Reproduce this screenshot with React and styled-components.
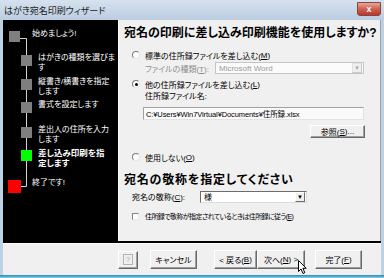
import React from "react";
import styled, { createGlobalStyle } from "styled-components";

const FONT = `"Liberation Sans", "Noto Sans CJK JP", sans-serif`;

const GlobalStyle = createGlobalStyle`
  body {
    margin: 0;
    background: #ffffff;
  }
  * {
    box-sizing: border-box;
  }
`;

const Window = styled.div`
  position: relative;
  width: 384px;
  height: 278px;
  display: flex;
  flex-direction: column;
  background: #bfd1e5;
  font-family: ${FONT};
  font-feature-settings: "palt";
  overflow: hidden;
`;

const TitleBar = styled.div`
  height: 20px;
  flex: none;
  display: flex;
  align-items: center;
  justify-content: space-between;
  padding: 0 3px 0 4px;
  background: linear-gradient(#d5e1ee, #bccde1);
`;

const Title = styled.span`
  font-size: 9px;
  color: #1b1b1b;
  white-space: nowrap;
`;

const CloseButton = styled.div`
  width: 24px;
  height: 14px;
  margin-top: -2px;
  display: flex;
  align-items: center;
  justify-content: center;
  border: 1px solid #86463f;
  border-radius: 0 0 3px 3px;
  background: linear-gradient(#e9a796, #cf5f51 50%, #b9392c);
  color: #fff;
  font-size: 9px;
  font-weight: bold;
  line-height: 1;
`;

const Client = styled.div`
  flex: 1;
  margin: 0 3px;
  display: flex;
  flex-direction: column;
  background: #f0f0f0;
`;

const Main = styled.div`
  height: 223px;
  flex: none;
  display: flex;
  border-bottom: 2px solid #000;
`;

const LeftPanel = styled.div`
  position: relative;
  width: 115px;
  flex: none;
  background: #000;
  padding-top: 9px;
`;

const Connector = styled.svg`
  position: absolute;
  left: 0;
  top: 0;
`;

const Step = styled.div`
  position: relative;
  display: flex;
  align-items: flex-start;
  height: ${(p) => p.$h}px;
  padding-left: ${(p) => p.$indent}px;
`;

const Marker = styled.span`
  flex: none;
  width: ${(p) => p.$size}px;
  height: ${(p) => p.$size}px;
  margin-top: 2px;
  background: ${(p) => p.$color};
`;

const StepText = styled.div`
  margin-left: ${(p) => p.$gap}px;
  color: #fff;
  font-size: ${(p) => (p.$active ? 8.5 : 8)}px;
  font-weight: ${(p) => (p.$active ? "bold" : "normal")};
  line-height: 10px;
  white-space: nowrap;
`;

const RightPanel = styled.div`
  flex: 1;
  display: flex;
  flex-direction: column;
  padding-top: 4px;
  background: #f0f0f0;
  border-left: 1px solid #fff;
  border-right: 1px solid #a0a0a0;
`;

const Heading = styled.div`
  height: 18px;
  margin-top: ${(p) => p.$mt || 0}px;
  padding-left: 5px;
  font-size: 12px;
  font-weight: bold;
  line-height: 18px;
  letter-spacing: ${(p) => p.$spacing || 0}px;
  color: #000;
  white-space: nowrap;
`;

const Row = styled.div`
  display: flex;
  align-items: center;
  height: ${(p) => p.$h}px;
  margin-top: ${(p) => p.$mt || 0}px;
  padding-left: ${(p) => p.$indent}px;
  font-size: 8px;
  color: ${(p) => (p.$disabled ? "#8d8d8d" : "#000")};
  white-space: nowrap;
`;

const Squeezed = styled.span`
  font-size: 7px;
  letter-spacing: -0.6px;
`;

const Radio = styled.span`
  flex: none;
  position: relative;
  width: 8px;
  height: 8px;
  margin-right: 5px;
  border-radius: 50%;
  border: 1px solid;
  border-color: #7c7c7c #e6e6e6 #e6e6e6 #7c7c7c;
  background: #fff;

  &::after {
    content: "";
    display: ${(p) => (p.$checked ? "block" : "none")};
    position: absolute;
    left: 1.5px;
    top: 1.5px;
    width: 3px;
    height: 3px;
    border-radius: 50%;
    background: #000;
  }
`;

const Check = styled.span`
  flex: none;
  width: 7px;
  height: 7px;
  margin-right: 6px;
  border: 1px solid;
  border-color: #848484 #e8e8e8 #e8e8e8 #848484;
  background: #fff;
`;

const Key = styled.span`
  text-decoration: underline;
`;

const Label = styled.span`
  width: ${(p) => p.$w}px;
  flex: none;
`;

const Combo = styled.div`
  width: ${(p) => p.$w}px;
  height: 12px;
  display: flex;
  align-items: center;
  padding-left: 3px;
  background: ${(p) => (p.$disabled ? "#fbfbfb" : "#fff")};
  border: 1px solid;
  border-color: ${(p) =>
    p.$disabled ? "#c5c5c5" : "#6d6d6d #dcdcdc #dcdcdc #6d6d6d"};
  color: ${(p) => (p.$disabled ? "#9a9a9a" : "#000")};
  font-size: 8px;
`;

const ComboValue = styled.span`
  flex: 1;
`;

const ComboArrow = styled.span`
  flex: none;
  width: 10px;
  height: 10px;
  margin-right: 1px;
  display: flex;
  align-items: center;
  justify-content: center;
  background: #f0f0f0;
  border: 1px solid;
  border-color: ${(p) =>
    p.$disabled ? "#e2e2e2 #c9c9c9 #c9c9c9 #e2e2e2" : "#fff #6d6d6d #6d6d6d #fff"};
  color: ${(p) => (p.$disabled ? "#a8a8a8" : "#000")};
  font-size: 6px;
  line-height: 1;
`;

const Field = styled.div`
  width: 221px;
  height: 13px;
  display: flex;
  align-items: center;
  padding-left: 2px;
  background: #fafafa;
  border: 1px solid;
  border-color: #a0a0a0 #e3e3e3 #e3e3e3 #a0a0a0;
  font-size: 7.5px;
  letter-spacing: -0.1px;
  color: #000;
`;

const Button = styled.button`
  flex: none;
  width: ${(p) => p.$w}px;
  height: ${(p) => p.$h || 19}px;
  margin-left: ${(p) => p.$ml || 0}px;
  padding: 0;
  display: flex;
  align-items: center;
  justify-content: center;
  background: #f0f0f0;
  border: 1px solid;
  border-color: #fff #696969 #696969 #fff;
  box-shadow: inset -1px -1px 0 #a0a0a0;
  font-family: ${FONT};
  font-feature-settings: "palt";
  font-size: 8px;
  color: #000;
  white-space: nowrap;
`;

const HelpGlyph = styled.span`
  width: 10px;
  height: 11px;
  display: flex;
  align-items: center;
  justify-content: center;
  border: 1px solid #b4b4b4;
  color: #a8a8a8;
  font-size: 8px;
  line-height: 1;
`;

const Footer = styled.div`
  height: 32px;
  flex: none;
  display: flex;
  align-items: center;
  padding-left: 115px;
  border-top: 1px solid #fff;
`;

const BottomEdge = styled.div`
  height: 3px;
  flex: none;
  background: linear-gradient(#2f86ad, #7fd0ec);
`;

const Cursor = styled.svg`
  position: absolute;
  left: 298px;
  top: 260px;
`;

const steps = [
  { h: 24, lines: ["はがきの種類を選びま", "す"] },
  { h: 23, lines: ["縦書き/横書きを指定", "します"] },
  { h: 25, lines: ["書式を設定します"] },
  { h: 23, lines: ["差出人の住所を入力", "します"] },
  { h: 30, lines: ["差し込み印刷を指", "定します"], active: true },
];

const App = () => {
  return (
    <>
      <GlobalStyle />
      <Window>
        <TitleBar>
          <Title>はがき宛名印刷ウィザード</Title>
          <CloseButton>x</CloseButton>
        </TitleBar>

        <Client>
          <Main>
            <LeftPanel>
              <Connector width="115" height="221">
                <path d="M17 18.5 H23.5 V166.5 H18" fill="none" stroke="#d4d4d4" strokeWidth="1" />
              </Connector>

              <Step $h={24} $indent={6}>
                <Marker $size={11} $color="#7f7f7f" />
                <StepText $gap={12}>始めましょう!</StepText>
              </Step>

              {steps.map((s, i) => (
                <Step key={i} $h={s.h} $indent={18}>
                  <Marker $size={11} $color={s.active ? "#00ff00" : "#7f7f7f"} />
                  <StepText $gap={6} $active={s.active}>
                    {s.lines.map((l, j) => (
                      <div key={j}>{l}</div>
                    ))}
                  </StepText>
                </Step>
              ))}

              <Step $h={20} $indent={5}>
                <Marker $size={13} $color="#ff0000" />
                <StepText $gap={11}>終了です!</StepText>
              </Step>
            </LeftPanel>

            <RightPanel>
              <Heading>宛名の印刷に差し込み印刷機能を使用しますか?</Heading>

              <Row $h={12} $mt={7} $indent={13}>
                <Radio />
                標準の住所録ファイルを差し込む(<Key>M</Key>)
              </Row>
              <Row $h={14} $indent={26} $disabled>
                <Label $w={70}>ファイルの種類(<Key>T</Key>):</Label>
                <Combo $w={149} $disabled>
                  <ComboValue>Microsoft Word</ComboValue>
                  <ComboArrow $disabled>▼</ComboArrow>
                </Combo>
              </Row>

              <Row $h={12} $mt={3} $indent={13}>
                <Radio $checked />
                他の住所録ファイルを差し込む(<Key>L</Key>)
              </Row>
              <Row $h={10} $indent={26}>
                住所録ファイル名:
              </Row>
              <Row $h={13} $mt={7} $indent={24}>
                <Field>C:¥Users¥Win7Virtual¥Documents¥住所録.xlsx</Field>
              </Row>
              <Row $h={13} $mt={5} $indent={191}>
                <Button $w={55} $h={13}>
                  参照(<Key>S</Key>)...
                </Button>
              </Row>

              <Row $h={12} $mt={13} $indent={13}>
                <Radio />
                使用しない(<Key>O</Key>)
              </Row>

              <Heading $mt={8} $spacing={0.8}>
                宛名の敬称を指定してください
              </Heading>

              <Row $h={13} $mt={1} $indent={13}>
                <Label $w={68}>宛名の敬称(<Key>C</Key>):</Label>
                <Combo $w={107}>
                  <ComboValue>様</ComboValue>
                  <ComboArrow>▼</ComboArrow>
                </Combo>
              </Row>
              <Row $h={12} $mt={7} $indent={13}>
                <Check />
                <Squeezed>
                  住所録で敬称が指定されているときは住所録に従う(<Key>E</Key>)
                </Squeezed>
              </Row>
            </RightPanel>
          </Main>

          <Footer>
            <Button $w={20} $h={18}>
              <HelpGlyph>?</HelpGlyph>
            </Button>
            <Button $w={47} $ml={12}>キャンセル</Button>
            <Button $w={43} $ml={17}>
              &lt; 戻る(<Key>B</Key>)
            </Button>
            <Button $w={48}>
              次へ(<Key>N</Key>) &gt;
            </Button>
            <Button $w={47} $ml={10}>
              完了(<Key>F</Key>)
            </Button>
          </Footer>
        </Client>

        <BottomEdge />

        <Cursor width="10" height="15" viewBox="0 0 10 15">
          <path
            d="M0.5 0.5 V11.5 L3 9 L5 13.5 L6.8 12.7 L4.9 8.3 H8.2 Z"
            fill="#fff"
            stroke="#000"
            strokeWidth="1"
          />
        </Cursor>
      </Window>
    </>
  );
};

export default App;
